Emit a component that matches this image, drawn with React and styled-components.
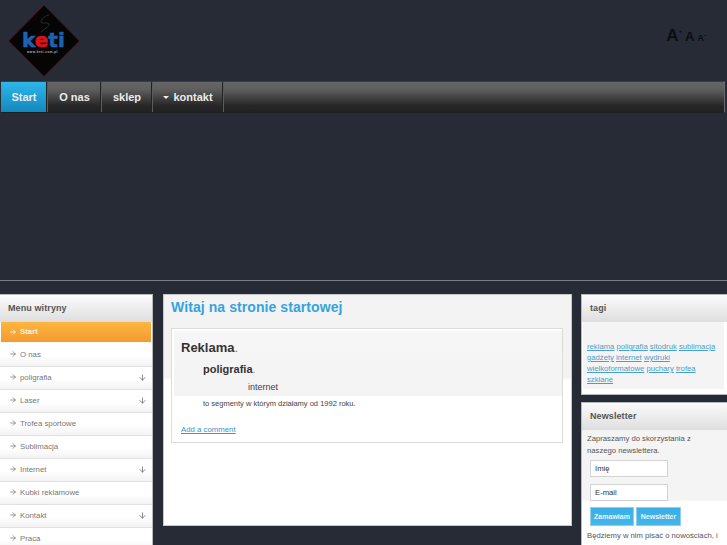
import React from 'react';
import styled, { createGlobalStyle } from 'styled-components';
import { ArrowRight, ArrowDown } from 'lucide-react';

const GlobalStyle = createGlobalStyle`
  html, body {
    margin: 0;
    padding: 0;
    height: 545px;
    overflow: hidden;
    background: #272b36;
    font-family: "Liberation Sans", Arial, sans-serif;
  }
`;

const Header = styled.header`
  height: 81px;
  display: flex;
  justify-content: space-between;
  align-items: flex-start;
`;

const Logo = styled.svg`
  display: block;
  margin: 4px 0 0 7px;
`;

const FontSizes = styled.div`
  display: flex;
  align-items: baseline;
  gap: 3px;
  margin: 26px 21px 0 0;
  color: #0c0e12;
  font-weight: 700;
`;

const SizeLetter = styled.span`
  font-size: ${({ $size }) => $size}px;
  line-height: 19px;

  sup {
    font-size: 6px;
    font-weight: 700;
    vertical-align: ${({ $size }) => $size / 2}px;
    line-height: 0;
  }
`;

const Nav = styled.nav`
  height: 32px;
  margin: 0 2px 0 1px;
  display: flex;
  background: linear-gradient(#666 0%, #5e5e5e 25%, #3a3a3a 60%, #262626 80%, #222 100%);
  border-top: 1px solid #3c3e42;
  border-bottom: 1px solid #1e2024;
  border-right: 1px solid #6a6a6a;
  box-sizing: border-box;
`;

const NavItem = styled.a`
  display: flex;
  align-items: center;
  justify-content: center;
  gap: 4px;
  width: ${({ $w }) => $w}px;
  box-sizing: border-box;
  font-size: 11px;
  font-weight: 700;
  color: #ececec;
  border-right: 1px solid #5c5c5c;
  box-shadow: inset -1px 0 0 #222;
  background: ${({ $active }) => ($active ? 'linear-gradient(#2fb6ea, #1388bd)' : 'transparent')};
`;

const Caret = styled.i`
  width: 0;
  height: 0;
  border-left: 3px solid transparent;
  border-right: 3px solid transparent;
  border-top: 3px solid #eee;
`;

const Hero = styled.div`
  height: 168px;
  border-bottom: 1px solid #7b7e84;
  box-sizing: border-box;
`;

const Columns = styled.div`
  display: flex;
  align-items: flex-start;
  margin-top: 13px;
`;

const Sidebar = styled.aside`
  width: 153px;
  flex: none;
  margin-right: 10px;
  background: #fff;
  border: 1px solid #b9babc;
  border-left: 0;
  box-sizing: border-box;
`;

const BoxTitle = styled.h3`
  margin: 0;
  height: 27px;
  padding: 0 0 2px 8px;
  box-sizing: border-box;
  display: flex;
  align-items: center;
  font-size: 9px;
  font-weight: 700;
  letter-spacing: 0.1px;
  color: #555;
  background: linear-gradient(#fbfbfb, #dedede);
`;

const MenuItem = styled.a`
  display: flex;
  align-items: center;
  height: 23px;
  box-sizing: border-box;
  padding: 0 5px 2px 9px;
  gap: 3px;
  font-size: 7.8px;
  color: #777;
  background: linear-gradient(#fff 55%, #f3f3f3);
  border-bottom: 1px solid #e0e0e0;

  span {
    flex: 1;
  }

  svg {
    color: #666;
  }
`;

const ActiveItem = styled(MenuItem)`
  margin: 0 1px 2px 1px;
  height: 20px;
  padding: 0 6px 1px 8px;
  font-weight: 700;
  color: #fbf4e6;
  background: linear-gradient(#fcb640, #f59a30);
  border-bottom: 0;

  svg {
    color: #fff;
  }
`;

const Main = styled.main`
  width: 409px;
  height: 232px;
  flex: none;
  margin-right: 9px;
  padding: 0 8px 0 7px;
  box-sizing: border-box;
  background: linear-gradient(#f3f3f3 0, #f3f3f3 82px, #fff 86px);
  border: 1px solid #c6c7c9;
`;

const PageTitle = styled.h1`
  margin: 0 0 10px;
  height: 23px;
  display: flex;
  align-items: center;
  font-size: 14px;
  font-weight: 700;
  letter-spacing: 0.08px;
  color: #35a3de;
`;

const Post = styled.article`
  height: 115px;
  box-sizing: border-box;
  padding: 2px 0 0 2px;
  background: #fff;
  border: 1px solid #dcdcdc;
`;

const Banner = styled.div`
  height: 62px;
  padding-top: 3px;
  background: linear-gradient(#f6f6f6, #f4f3f3);
  margin-bottom: 2px;
`;

const Line = styled.p`
  margin: 0;
  padding-left: ${({ $indent }) => $indent}px;
  height: ${({ $h }) => $h}px;
  display: flex;
  align-items: center;
  font-size: ${({ $size }) => $size}px;
  color: #444;
`;

const Strong = styled.strong`
  font-weight: 700;
  color: #333;
`;

const Dot = styled.span`
  font-weight: 400;
  color: #888;
`;

const CommentLink = styled.a`
  display: block;
  margin: 16px 0 0 7px;
  font-size: 7.8px;
  color: #3a94c4;
  text-decoration: underline;
`;

const RightColumn = styled.div`
  width: 146px;
  flex: none;
  display: flex;
  flex-direction: column;
  gap: 7px;
`;

const Box = styled.section`
  background: #fff;
  border: 1px solid #b9babc;
  border-right: 0;
  box-sizing: border-box;
  height: ${({ $h }) => $h}px;
  overflow: hidden;
`;

const TagBody = styled.div`
  margin: 0 3px 0 1px;
  padding: 19px 3px 4px 4px;
  background: #f5f4f4;
  font-size: 7.7px;
  line-height: 11px;
`;

const Tag = styled.a`
  color: #4a9fc9;
  text-decoration: underline;
`;

const NewsBody = styled.div`
  padding: 3px 3px 0 5px;
  font-size: 7.7px;
  line-height: 11.5px;
  color: #555;
  background: linear-gradient(#f5f4f4 0, #f5f4f4 70px, #fff 72px);
`;

const Field = styled.div`
  width: 78px;
  height: 17px;
  margin: ${({ $top }) => $top}px 0 0 3px;
  padding-left: 4px;
  box-sizing: border-box;
  display: flex;
  align-items: center;
  background: #fff;
  border: 1px solid #d3d3d3;
  color: #333;
`;

const Buttons = styled.div`
  display: flex;
  gap: 2px;
  margin: 6px 0 4px 3px;
`;

const BlueButton = styled.button`
  width: ${({ $w }) => $w}px;
  height: 19px;
  padding: 0;
  border: 1px solid #8fd0ef;
  background: linear-gradient(#3aaee6, #45b6ea);
  color: #e8f6fc;
  font: 700 7px "Liberation Sans", Arial, sans-serif;
`;

const menu = [
  { label: 'O nas' },
  { label: 'poligrafia', sub: true },
  { label: 'Laser', sub: true },
  { label: 'Trofea sportowe' },
  { label: 'Sublimacja' },
  { label: 'Internet', sub: true },
  { label: 'Kubki reklamowe' },
  { label: 'Kontakt', sub: true },
  { label: 'Praca' },
];

const tags = ['reklama', 'poligrafia', 'sitodruk', 'sublimacja', 'gadżety', 'internet', 'wydruki', 'wielkoformatowe', 'puchary', 'trofea', 'szklane'];

function App() {
  return (
    <>
      <GlobalStyle />
      <Header>
        <Logo width="74" height="74" viewBox="0 0 74 74">
          <polygon points="37,1 72.5,37 37,72.5 1.5,37" fill="#050505" stroke="#4a1620" strokeWidth="1" />
          <path d="M42 11C37 12 34 16 34 18C34 20 41 18 42 20C43 23 36 25 34 28" fill="none" stroke="#3e3e3e" strokeWidth="0.7" />
          <text x="15" y="43" fontFamily="DejaVu Sans" fontWeight="700" fontSize="20" fill="#1c62b4" stroke="#1c62b4" strokeWidth="0.6">
            k<tspan fill="#d8141c" stroke="#d8141c">e</tspan>ti
          </text>
          <text x="20" y="49" fontFamily="Liberation Sans" fontWeight="700" fontSize="3" fill="#b5b5b5" letterSpacing="0.5">www.keti.com.pl</text>
        </Logo>
        <FontSizes>
          <SizeLetter $size={17}>A<sup>+</sup></SizeLetter>
          <SizeLetter $size={13}>A</SizeLetter>
          <SizeLetter $size={9}>A<sup>-</sup></SizeLetter>
        </FontSizes>
      </Header>
      <Nav>
        <NavItem $active $w={47}>Start</NavItem>
        <NavItem $w={54}>O nas</NavItem>
        <NavItem $w={51}>sklep</NavItem>
        <NavItem $w={71}><Caret />kontakt</NavItem>
      </Nav>
      <Hero />
      <Columns>
        <Sidebar>
          <BoxTitle>Menu witryny</BoxTitle>
          <ActiveItem><ArrowRight size={8} /><span>Start</span></ActiveItem>
          {menu.map((item) => (
            <MenuItem key={item.label}>
              <ArrowRight size={8} />
              <span>{item.label}</span>
              {item.sub && <ArrowDown size={9} />}
            </MenuItem>
          ))}
        </Sidebar>
        <Main>
          <PageTitle>Witaj na stronie startowej</PageTitle>
          <Post>
            <Banner>
              <Line $indent={7} $h={26} $size={13}><Strong>Reklama</Strong><Dot>.</Dot></Line>
              <Line $indent={29} $h={17} $size={11}><Strong>poligrafia</Strong><Dot>.</Dot></Line>
              <Line $indent={74} $h={19} $size={9}>internet</Line>
            </Banner>
            <Line $indent={29} $h={11} $size={7.5}>to segmenty w którym działamy od 1992 roku.</Line>
            <CommentLink>Add a comment</CommentLink>
          </Post>
        </Main>
        <RightColumn>
          <Box $h={101}>
            <BoxTitle>tagi</BoxTitle>
            <TagBody>
              {tags.map((tag) => (
                <React.Fragment key={tag}>
                  <Tag>{tag}</Tag>{' '}
                </React.Fragment>
              ))}
            </TagBody>
          </Box>
          <Box $h={160}>
            <BoxTitle>Newsletter</BoxTitle>
            <NewsBody>
              Zapraszamy do skorzystania z<br />naszego newslettera.
              <Field $top={4}>Imię</Field>
              <Field $top={7}>E-mail</Field>
              <Buttons>
                <BlueButton $w={44}>Zamawiam</BlueButton>
                <BlueButton $w={45}>Newsletter</BlueButton>
              </Buttons>
              Będziemy w nim pisać o nowościach, i promocjach w naszym sklepie.
            </NewsBody>
          </Box>
        </RightColumn>
      </Columns>
    </>
  );
}

export default App;
